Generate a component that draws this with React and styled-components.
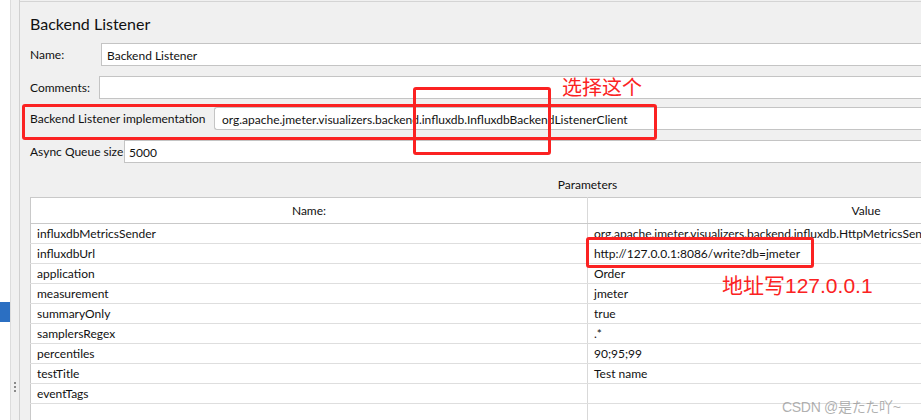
import { createGlobalStyle, styled } from 'styled-components'

const GlobalStyle = createGlobalStyle`
  html, body {
    margin: 0;
    padding: 0;
    background: #f0f0f0;
    overflow: hidden;
  }
  body {
    font-family: Lato, "Liberation Sans", sans-serif;
    font-size: 12px;
    color: #111;
  }
`

const Shell = styled.div`
  display: flex;
  height: 420px;
  width: 921px;
  overflow: hidden;
  position: relative;
`

const Tree = styled.div`
  width: 10px;
  background: #fff;
  position: relative;
`

const TreeSelection = styled.div`
  position: absolute;
  left: 0;
  top: 302px;
  width: 10px;
  height: 20px;
  background: #2b6fc2;
`

const Splitter = styled.div`
  width: 8px;
  background: #f0f0f0;
  border-left: 1px solid #dcdcdc;
  border-right: 1px solid #d0d0d0;
  display: flex;
  flex-direction: column;
  align-items: center;
  justify-content: flex-end;
  padding-bottom: 28px;
  gap: 2px;
`

const Dot = styled.span`
  width: 2px;
  height: 2px;
  background: #8a8a8a;
`

const Panel = styled.div`
  flex: 1;
  min-width: 0;
  border-top: 1px solid #d4d4d4;
  margin-top: 1px;
  padding-left: 10px;
  overflow: hidden;
`

const Title = styled.h1`
  margin: 0;
  padding-top: 12px;
  height: 30px;
  font-size: 16px;
  font-weight: 400;
  line-height: 20px;
  box-sizing: border-box;
`

const FormRow = styled.div`
  display: flex;
  align-items: center;
  height: 23px;
  margin-top: ${(p) => p.$gap}px;
`

const Label = styled.label`
  width: ${(p) => p.$w}px;
  flex: none;
  white-space: nowrap;
`

const Field = styled.div`
  flex: 1;
  height: 23px;
  box-sizing: border-box;
  background: #fff;
  border: 1px solid #c4c4c4;
  border-right: none;
  display: flex;
  align-items: center;
  padding-left: ${(p) => p.$pad}px;
  padding-top: 1px;
  white-space: nowrap;
  ${(p) => p.$rounded && 'border-radius: 3px 0 0 3px;'}
`

const SectionTitle = styled.div`
  text-align: center;
  margin-top: 14px;
  height: 20px;
  line-height: 15px;
  width: 1115px;
`

const Table = styled.table`
  border-collapse: collapse;
  table-layout: fixed;
  width: 1115px;
  background: #fff;
  border: 1px solid #c9c9c9;
  border-bottom: none;
`

const HeadCell = styled.th`
  font-weight: 400;
  height: 25px;
  padding: 0;
  line-height: 25px;
  text-align: center;
  vertical-align: middle;
  border-bottom: 1px solid #c9c9c9;
  border-right: 1px solid #d9d9d9;
`

const Cell = styled.td`
  height: 19px;
  padding: 0 6px;
  border-bottom: 1px solid #dedede;
  border-right: 1px solid #d9d9d9;
  white-space: nowrap;
  overflow: hidden;
`

const RedBox = styled.div`
  position: absolute;
  left: ${(p) => p.$x}px;
  top: ${(p) => p.$y}px;
  width: ${(p) => p.$w}px;
  height: ${(p) => p.$h}px;
  box-sizing: border-box;
  border: 3px solid #fb2222;
  border-radius: 3px;
  pointer-events: none;
`

const Note = styled.div`
  position: absolute;
  left: ${(p) => p.$x}px;
  top: ${(p) => p.$y}px;
  color: #fb2222;
  font-family: "Liberation Sans", "Noto Sans CJK SC", sans-serif;
  font-size: ${(p) => p.$size}px;
  line-height: 1;
  white-space: nowrap;
`

const Watermark = styled.div`
  position: absolute;
  left: 782px;
  top: 396px;
  font-family: "Liberation Sans", "Noto Sans CJK SC", sans-serif;
  font-size: 14px;
  letter-spacing: -0.3px;
  color: rgba(150, 150, 150, 0.75);
  white-space: nowrap;
`

const params = [
  ['influxdbMetricsSender', 'org.apache.jmeter.visualizers.backend.influxdb.HttpMetricsSender'],
  ['influxdbUrl', 'http://127.0.0.1:8086/write?db=jmeter'],
  ['application', 'Order'],
  ['measurement', 'jmeter'],
  ['summaryOnly', 'true'],
  ['samplersRegex', '.*'],
  ['percentiles', '90;95;99'],
  ['testTitle', 'Test name'],
  ['eventTags', ''],
  ['', ''],
]

export default function App() {
  return (
    <>
      <GlobalStyle />
      <Shell>
        <Tree>
          <TreeSelection />
        </Tree>
        <Splitter>
          <Dot />
          <Dot />
          <Dot />
        </Splitter>
        <Panel>
          <Title>Backend Listener</Title>
          <FormRow $gap={11}>
            <Label $w={71}>Name:</Label>
            <Field $pad={5}>Backend Listener</Field>
          </FormRow>
          <FormRow $gap={10}>
            <Label $w={69}>Comments:</Label>
            <Field $pad={5} />
          </FormRow>
          <FormRow $gap={8}>
            <Label $w={184}>Backend Listener implementation</Label>
            <Field $pad={7} $rounded>
              org.apache.jmeter.visualizers.backend.influxdb.InfluxdbBackendListenerClient
            </Field>
          </FormRow>
          <FormRow $gap={10}>
            <Label $w={94}>Async Queue size</Label>
            <Field $pad={4}>5000</Field>
          </FormRow>
          <SectionTitle>Parameters</SectionTitle>
          <Table>
            <thead>
              <tr>
                <HeadCell>Name:</HeadCell>
                <HeadCell>Value</HeadCell>
              </tr>
            </thead>
            <tbody>
              {params.map(([name, value], i) => (
                <tr key={i}>
                  <Cell>{name}</Cell>
                  <Cell>{value}</Cell>
                </tr>
              ))}
            </tbody>
          </Table>
        </Panel>

        <RedBox $x={22} $y={104} $w={635} $h={36} />
        <RedBox $x={413} $y={87} $w={138} $h={68} />
        <RedBox $x={586} $y={237} $w={228} $h={31} />
        <Note $x={562} $y={78} $size={20}>选择这个</Note>
        <Note $x={722} $y={275} $size={21}>地址写127.0.0.1</Note>
        <Watermark>CSDN @是たた吖~</Watermark>
      </Shell>
    </>
  )
}
